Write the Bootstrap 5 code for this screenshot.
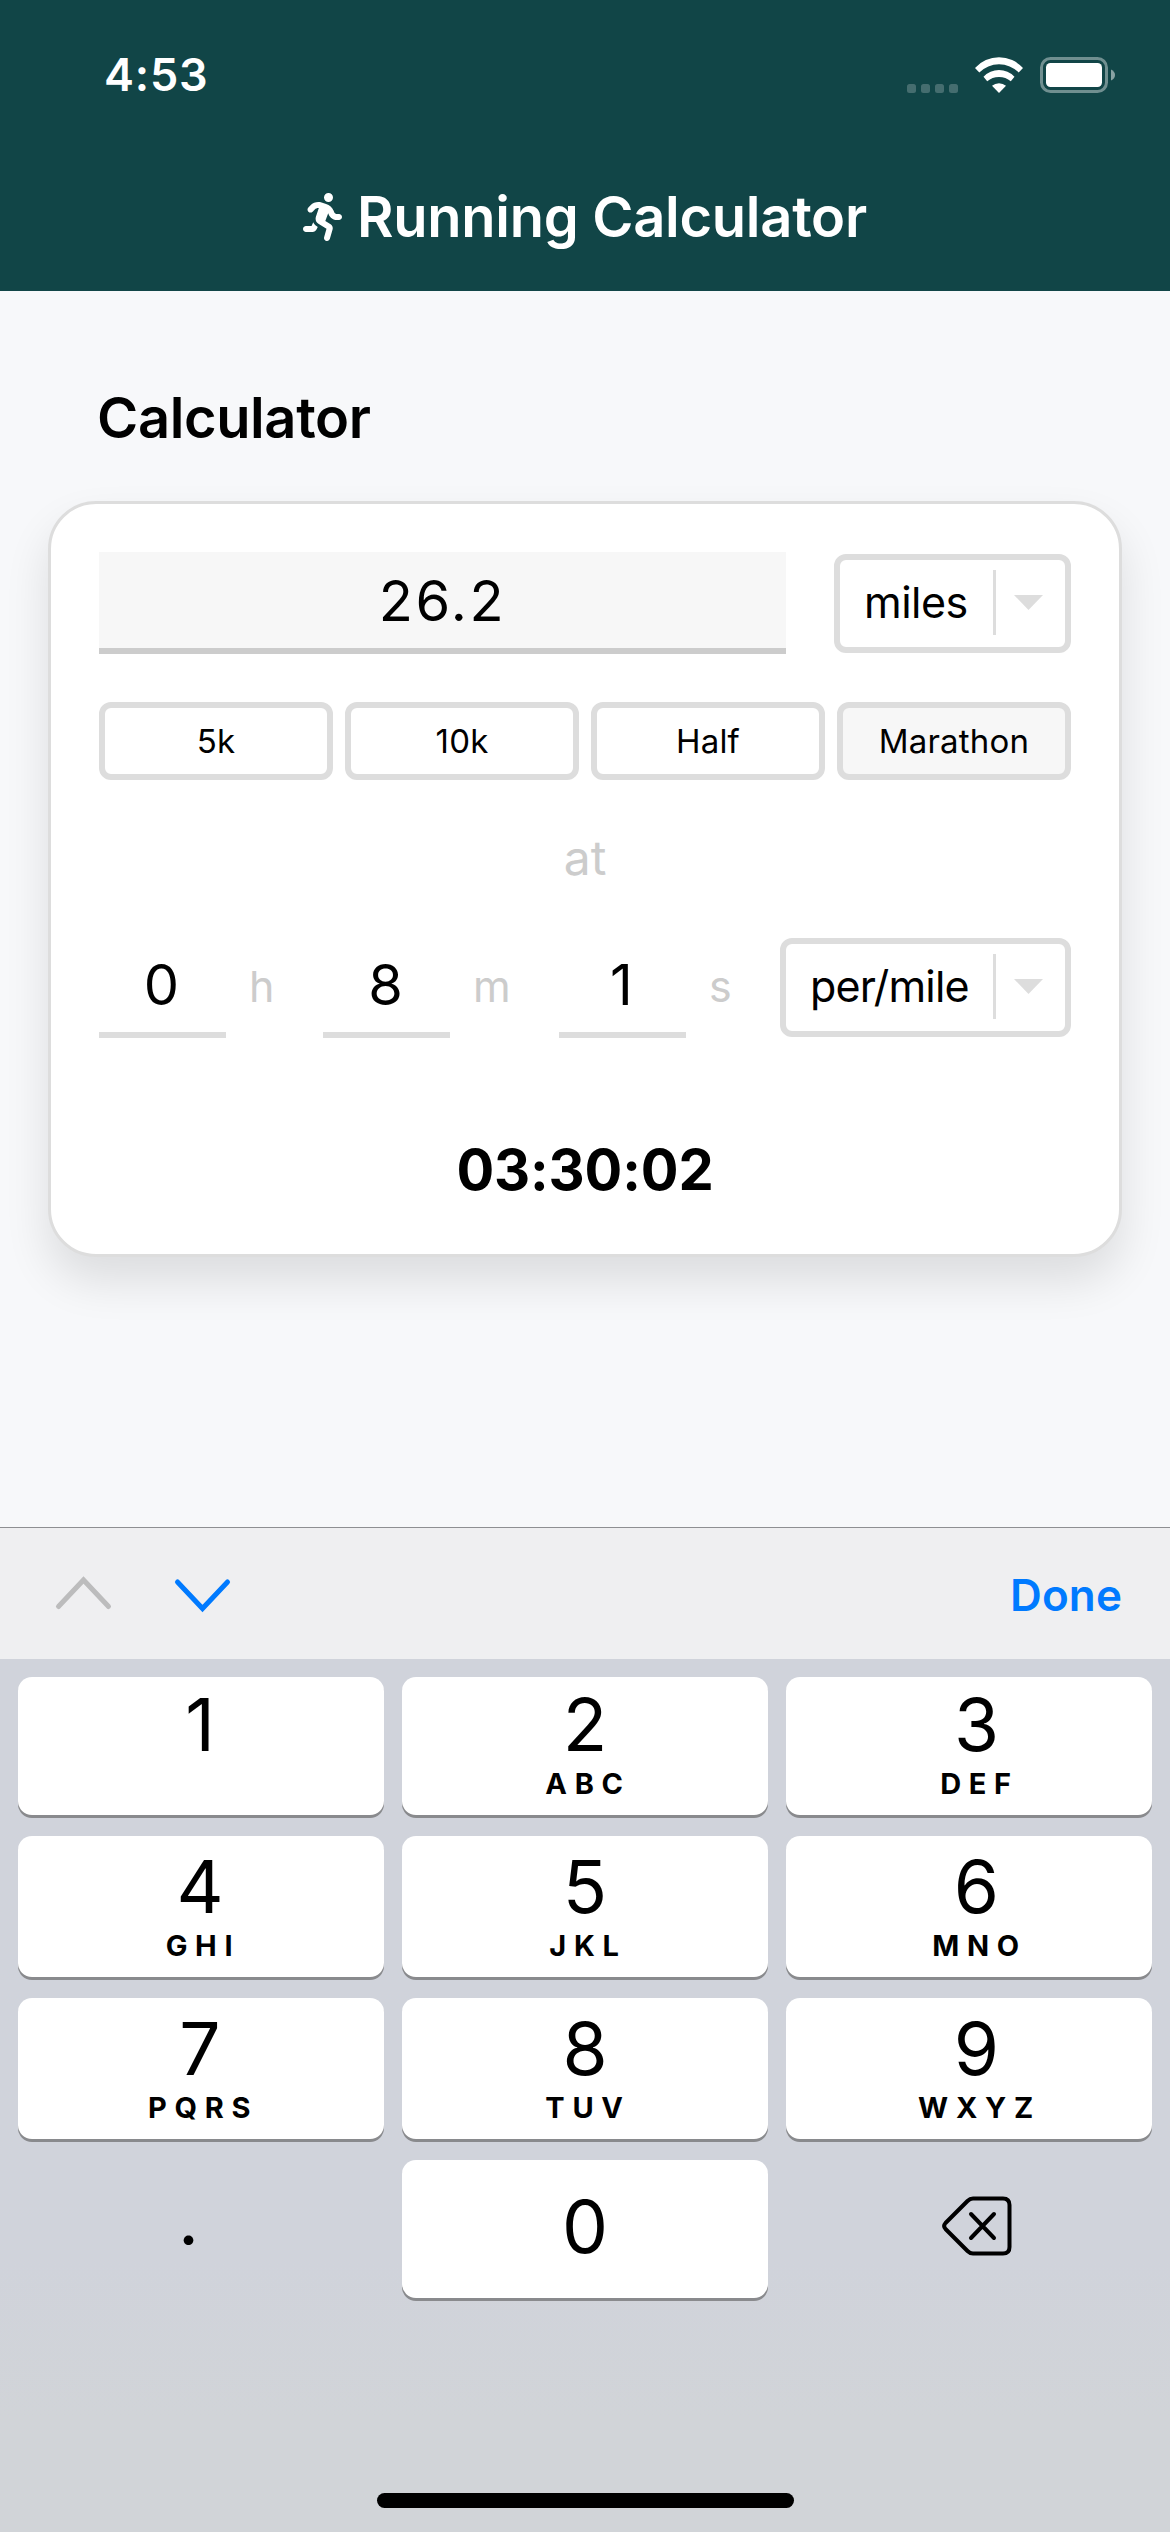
<!DOCTYPE html>
<html lang="en">
<head>
<meta charset="utf-8">
<meta name="viewport" content="width=device-width, initial-scale=1">
<title>Running Calculator</title>
<link href="https://cdn.jsdelivr.net/npm/bootstrap@5.3.0/dist/css/bootstrap.min.css" rel="stylesheet">
<style>
  body { font-family: Inter, "Liberation Sans", sans-serif; background: #f7f8fa; color: #000; width: 1170px; }
  .screen { height: 2532px; }
  .top-area { background: #114547; color: #fff; height: 291px; }
  .status { height: 149px; padding: 0 54px 0 104px; }
  .clock { font-size: 45px; font-weight: 600; letter-spacing: .8px; line-height: 1; }
  .status-icons { gap: 17px; }
  .title-row { height: 136px; padding-left: 303px; gap: 15px; }
  .app-title { font-size: 56px; font-weight: 600; letter-spacing: -.27px; line-height: 1; white-space: nowrap; }
  .section-title { font-size: 56px; font-weight: 600; letter-spacing: -.38px; line-height: 165px; padding: 45px 0 0 97px; }
  .calc { margin: 0 48px; height: 756px; border: 3px solid #ddd; border-radius: 48px; padding: 48px 48px 0;
          box-shadow: 0 24px 45px rgba(0,0,0,.11); }
  .field { height: 102px; border: 0; border-bottom: 6px solid #ddd; border-radius: 0; padding: 2px 0 0; font-size: 56px; color: #000; text-align: center; background: #fff; }
  .field-distance { width: 687px; background: #f7f7f7; border-color: #ccc; letter-spacing: 2.6px; }
  .field-time { width: 127px; padding-right: 2px; }
  .picker { height: 99px; margin-top: 2px; border: 6px solid #ddd; border-radius: 12px; font-size: 43px; line-height: 85px; padding: 0 22px 2px 24px; }
  .picker-label { letter-spacing: -.5px; }
  .picker-pace .picker-label { letter-spacing: -.8px; }
  .picker-rule { width: 3px; height: 65px; background: #ddd; margin: 0 18px 1px auto; }
  .presets { gap: 12px; margin-top: 48px; }
  .preset { flex: 1 1 0; height: 78px; border: 6px solid #ddd; border-radius: 12px; background: #fff; color: #000; font-size: 33px; line-height: 66px; padding: 0; letter-spacing: .2px; }
  .preset.chosen { background: #f7f7f7; }
  .at-word { font-size: 48px; line-height: 156px; color: #ccc; }
  .unit { font-size: 43px; line-height: 101px; color: #ccc; padding-left: 23px; }
  .unit-h { width: 97px; } .unit-m { width: 109px; } .unit-s { width: 94px; }
  .result { font-size: 56px; font-weight: 700; line-height: 168px; margin-top: 48px; letter-spacing: -.14px; }
  .accessory { height: 132px; background: #efeff1; border-top: 1px solid #8e8f92; padding: 0 48px 0 53px; }
  .done { font-size: 44px; font-weight: 600; color: #007aff; line-height: 1; letter-spacing: .1px; padding-top: 3px; }
  .keyboard { height: 873px; background: linear-gradient(#d0d3db 0, #d0d3db 600px, #d1d4d8 760px, #d1d4d8 100%); padding: 18px 18px 24px; }
  .keys { display: grid; grid-template-columns: repeat(3, 1fr); grid-template-rows: 138px 141px 141px 138px; gap: 21px 18px; }
  .key { background: #fff; border-radius: 14px; box-shadow: 0 3px 0 #898a8d; padding-top: 14px; text-align: center; }
  .key:nth-child(3n+1) { padding-right: 2px; }
  .key:nth-child(3n) { padding-left: 15px; }
  .key-first { padding-top: 11px; }
  .key-zero { padding-top: 30px; }
  .key-plain { background: none; box-shadow: none; }
  .digit { font-size: 73px; line-height: 73px; }
  .letters { font-size: 29px; font-weight: 650; line-height: 30px; letter-spacing: 7.7px; margin-top: 8px; padding-left: 6px; }
  .key.key-dot { padding: 22px 25px 0 0; }
  .key.key-back { padding: 36px 0 0 15px; }
  .home-bar { width: 417px; height: 15px; border-radius: 8px; background: #000; }
</style>
</head>
<body>
<div class="screen d-flex flex-column">
  <header class="top-area">
    <div class="status d-flex align-items-center justify-content-between">
      <div class="clock">4:53</div>
      <div class="status-icons d-flex align-items-center">
        <svg width="51" height="36" viewBox="0 0 51 36" fill="#fff" fill-opacity=".22"><rect y="27" width="9" height="9" rx="2.5"/><rect x="14" y="27" width="9" height="9" rx="2.5"/><rect x="28" y="27" width="9" height="9" rx="2.5"/><rect x="42" y="27" width="9" height="9" rx="2.5"/></svg>
        <svg width="48" height="36" viewBox="0 0 48 36" fill="#fff"><path d="M0 11A32.3 32.3 0 0 1 48 11L43.7 15.5A27.8 27.8 0 0 0 4.3 15.5Z"/><path d="M8.5 19.7A21.5 21.5 0 0 1 39.5 19.7L35.8 24.3A18 18 0 0 0 12.2 24.3Z"/><path d="M17 28.7A11 11 0 0 1 31 28.7L24 36Z"/></svg>
        <svg width="76" height="36" viewBox="0 0 76 36"><rect x="1.5" y="1.5" width="65" height="33" rx="9" fill="none" stroke="#fff" stroke-opacity=".4" stroke-width="3"/><rect x="6" y="6" width="56" height="24" rx="4.5" fill="#fff"/><path d="M71 12.5Q75 14.5 75 18T71 23.500Z" fill="#fff" fill-opacity=".5"/></svg>
      </div>
    </div>
    <div class="title-row d-flex align-items-center">
      <svg width="39" height="48" viewBox="0 0 416 512" fill="#fff"><path d="M320 48a48 48 0 1 0-96 0 48 48 0 1 0 96 0zM125.700 175.500c9.900-9.900 23.400-15.500 37.500-15.500 1.900 0 3.800.1 5.600.3L137.600 254c-9.300 28 1.700 58.800 26.800 74.500l86.200 53.900-25.400 88.800c-4.900 17 5 34.700 22 39.600s34.700-5 39.600-22l28.700-100.400c5.900-20.600-2.600-42.600-20.700-53.900L238 299l30.900-82.400 5.100 12.300C289 264.700 323.900 288 362.700 288H384c17.700 0 32-14.300 32-32s-14.300-32-32-32h-21.300c-12.900 0-24.600-7.800-29.500-19.700l-6.300-15c-14.600-35.100-44.100-61.900-80.500-73.100l-48.700-15C186.600 97.800 175 96 163.300 96c-31 0-60.800 12.300-82.700 34.300L57.400 153.400c-12.500 12.500-12.500 32.800 0 45.300s32.800 12.500 45.300 0l23.100-23.100zM91.200 352H32c-17.700 0-32 14.300-32 32s14.300 32 32 32h69.600c19 0 36.200-11.200 43.900-28.500L157 361.600l-9.500-6c-17.500-10.900-30.500-26.800-37.900-44.900L91.200 352z"/></svg>
      <div class="app-title">Running Calculator</div>
    </div>
  </header>

  <main class="flex-grow-1">
    <h1 class="section-title mb-0">Calculator</h1>
    <section class="calc bg-white">
      <div class="d-flex justify-content-between align-items-start">
        <input class="field field-distance" type="text" value="26.2" aria-label="Distance">
        <div class="picker d-flex align-items-center" style="width:237px">
          <span class="picker-label">miles</span><span class="picker-rule"></span>
          <svg width="29" height="15" viewBox="0 0 29 15"><path d="M0 0H29L14.500 15Z" fill="#ddd"/></svg>
        </div>
      </div>
      <div class="presets d-flex">
        <button class="btn preset">5k</button>
        <button class="btn preset">10k</button>
        <button class="btn preset">Half</button>
        <button class="btn preset chosen">Marathon</button>
      </div>
      <div class="at-word text-center">at</div>
      <div class="d-flex align-items-start">
        <input class="field field-time" type="text" value="0" aria-label="Hours"><span class="unit unit-h">h</span>
        <input class="field field-time" type="text" value="8" aria-label="Minutes"><span class="unit unit-m">m</span>
        <input class="field field-time" type="text" value="1" aria-label="Seconds"><span class="unit unit-s">s</span>
        <div class="picker picker-pace d-flex align-items-center" style="width:291px">
          <span class="picker-label">per/mile</span><span class="picker-rule"></span>
          <svg width="29" height="15" viewBox="0 0 29 15"><path d="M0 0H29L14.500 15Z" fill="#ddd"/></svg>
        </div>
      </div>
      <div class="result text-center">03:30:02</div>
    </section>
  </main>

  <div class="accessory d-flex align-items-center">
    <svg width="180" height="38" viewBox="0 0 180 38" fill="none" stroke-width="5" stroke-linecap="round" stroke-linejoin="miter"><path d="M5.500 31.500L30.500 5L55.500 31.500" stroke="#bcbcbd"/><path d="M124.500 7L149.500 33.500L174.500 7" stroke="#007aff"/></svg>
    <div class="done ms-auto">Done</div>
  </div>

  <div class="keyboard d-flex flex-column justify-content-between align-items-center">
    <div class="keys w-100">
      <div class="key key-first"><div class="digit">1</div></div>
      <div class="key key-first"><div class="digit">2</div><div class="letters">ABC</div></div>
      <div class="key key-first"><div class="digit">3</div><div class="letters">DEF</div></div>
      <div class="key"><div class="digit">4</div><div class="letters">GHI</div></div>
      <div class="key"><div class="digit">5</div><div class="letters">JKL</div></div>
      <div class="key"><div class="digit">6</div><div class="letters">MNO</div></div>
      <div class="key"><div class="digit">7</div><div class="letters">PQRS</div></div>
      <div class="key"><div class="digit">8</div><div class="letters">TUV</div></div>
      <div class="key"><div class="digit">9</div><div class="letters">WXYZ</div></div>
      <div class="key key-plain key-dot"><div class="digit">.</div></div>
      <div class="key key-zero"><div class="digit">0</div></div>
      <div class="key key-plain key-back">
        <svg class="d-block mx-auto" width="70" height="60" viewBox="0 0 70 60" fill="none" stroke="#000" stroke-width="4" stroke-linecap="round" stroke-linejoin="round"><path d="M31 2.500H61Q67.500 2.500 67.500 9V51Q67.500 57.500 61 57.500H31Q28 57.500 25.500 55L3.500 33Q.800 30 3.500 27L25.500 5Q28 2.500 31 2.500Z"/><path d="M29 18L52 42M52 18L29 42"/></svg>
      </div>
    </div>
    <div class="home-bar"></div>
  </div>
</div>
<script src="https://cdn.jsdelivr.net/npm/bootstrap@5.3.0/dist/js/bootstrap.bundle.min.js"></script>
</body>
</html>
